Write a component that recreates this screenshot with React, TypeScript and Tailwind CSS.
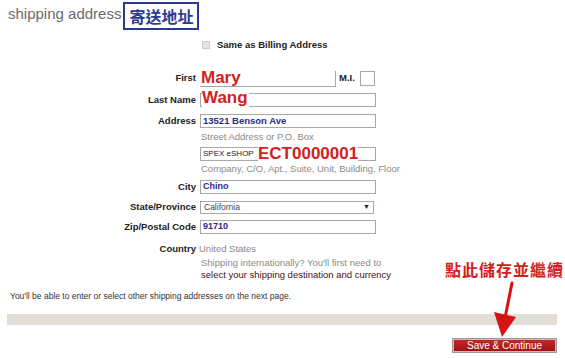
const labelCls = "w-[198px] shrink-0 pr-[2px] text-right text-[9.5px] font-bold text-[#222]";
const boxCls = "h-[14px] w-[176px] border border-[#a8a8a8] bg-white";

function Row({ label, top, children }: { label: string; top: string; children: React.ReactNode }) {
  return (
    <div className={`flex items-center ${top}`}>
      <div className={labelCls}>{label}</div>
      <div className="flex items-center">{children}</div>
    </div>
  );
}

function Helper({ top, children, tone = "text-[#8a8a8a]" }: { top: string; children: React.ReactNode; tone?: string }) {
  return (
    <div className={`flex ${top}`}>
      <div className="w-[201px] shrink-0" />
      <div className={`h-[12px] text-[9.5px] leading-[12px] ${tone}`}>{children}</div>
    </div>
  );
}

function Arrow() {
  return (
    <svg className="absolute left-[490px] top-[280px]" width="40" height="60" viewBox="0 0 40 60">
      <path d="M22 3 L15 38" stroke="#d41414" strokeWidth="3" strokeLinecap="round" fill="none" />
      <path d="M4 32 L26 37 L12 57 Z" fill="#d41414" />
    </svg>
  );
}

export default function App() {
  return (
    <div className="relative h-[358px] w-[565px] overflow-hidden bg-white font-['Liberation_Sans',Arial,sans-serif]">
      <div className="flex h-[32px] items-start pl-2 pt-[2px]">
        <span className="mt-[2px] text-[15px] leading-[20px] text-[#6b6b6b]">shipping address</span>
        <span className="ml-[2px] flex h-[28px] items-center border-2 border-[#2b3a8f] px-[4px] font-['Noto_Sans_CJK_TC',sans-serif] text-[16px] font-bold leading-none text-[#2b3a8f]">
          寄送地址
        </span>
      </div>

      <div className="mt-[8px] flex h-[10px] items-center pl-[202px]">
        <span className="h-[8px] w-[8px] border border-[#cfcfcf] bg-[#e4e4e4]" />
        <span className="ml-[7px] text-[9.5px] font-bold text-[#222]">Same as Billing Address</span>
      </div>

      <Row label="First" top="mt-[20px] h-[17px]">
        <div className="relative ml-[2px] h-[16px] w-[136px] border-b border-r border-[#a8a8a8]">
          <span className="absolute -top-[3px] left-[1px] text-[17px] font-bold leading-[20px] text-[#d42020]">Mary</span>
        </div>
        <span className="ml-[3px] text-[9.5px] font-bold text-[#222]">M.I.</span>
        <div className="ml-[5px] h-[15px] w-[15px] border border-[#a8a8a8]" />
      </Row>

      <Row label="Last Name" top="mt-[6px] h-[14px]">
        <div className={`relative ml-[2px] ${boxCls}`}>
          <span className="absolute -top-[6px] left-[1px] bg-white pr-[1px] text-[17px] font-bold leading-[20px] text-[#d42020]">Wang</span>
        </div>
      </Row>

      <Row label="Address" top="mt-[7px] h-[14px]">
        <div className={`ml-[2px] flex items-center pl-[2px] ${boxCls}`}>
          <span className="text-[9.5px] font-bold text-[#2a2a8a]">13521 Benson Ave</span>
        </div>
      </Row>

      <Helper top="mt-[3px]">Street Address or P.O. Box</Helper>

      <Row label="" top="mt-[4px] h-[14px]">
        <div className={`relative ml-[2px] flex items-center pl-[2px] ${boxCls}`}>
          <span className="text-[8px] text-[#222]">SPEX eSHOP</span>
          <span className="absolute -top-[4px] left-[57px] bg-white text-[17px] font-bold leading-[20px] text-[#d42020]">ECT0000001</span>
        </div>
      </Row>

      <Helper top="mt-[2px]">Company, C/O, Apt., Suite, Unit, Building, Floor</Helper>

      <Row label="City" top="mt-[5px] h-[14px]">
        <div className={`ml-[2px] flex items-center pl-[2px] ${boxCls}`}>
          <span className="text-[9px] font-bold text-[#2a2a8a]">Chino</span>
        </div>
      </Row>

      <Row label="State/Province" top="mt-[7px] h-[12px]">
        <div className="ml-[2px] flex h-[13px] w-[174px] items-center justify-between border border-[#a8a8a8] px-[3px]">
          <span className="text-[8.5px] text-[#444]">California</span>
          <span className="text-[7px] text-[#222]">▼</span>
        </div>
      </Row>

      <Row label="Zip/Postal Code" top="mt-[7px] h-[14px]">
        <div className={`ml-[2px] flex items-center pl-[2px] ${boxCls}`}>
          <span className="text-[9px] font-bold text-[#2a2a8a]">91710</span>
        </div>
      </Row>

      <div className="mt-[9px] flex h-[12px] items-center">
        <div className={labelCls}>Country</div>
        <span className="ml-[1px] text-[9.5px] text-[#8a8a8a]">United States</span>
      </div>

      <Helper top="mt-[2px]">Shipping internationally? You'll first need to</Helper>
      <Helper top="" tone="text-[#4a1010]">select your shipping destination and currency</Helper>

      <div className="mt-[9px] h-[12px] pl-[10px] text-[8.5px] leading-[12px] text-[#333]">
        You'll be able to enter or select other shipping addresses on the next page.
      </div>

      <div className="ml-[7px] mt-[12px] h-[11px] w-[550px] bg-[#e1ddd9]" />

      <div className="mt-[13px] flex justify-end pr-[8px]">
        <button
          type="button"
          className="flex h-[15px] w-[105px] items-center justify-center border border-[#9a9a9a] bg-gradient-to-b from-[#c52a2a] to-[#9c1010] text-[10px] leading-none text-white shadow-[inset_0_0_0_1px_#e7b0b0]"
        >
          Save &amp; Continue
        </button>
      </div>

      <div className="absolute left-[445px] top-[259px] font-['Noto_Sans_CJK_TC',sans-serif] text-[16px] font-bold leading-[20px] tracking-[1px] text-[#d42020]">
        點此儲存並繼續
      </div>
      <Arrow />
    </div>
  );
}
